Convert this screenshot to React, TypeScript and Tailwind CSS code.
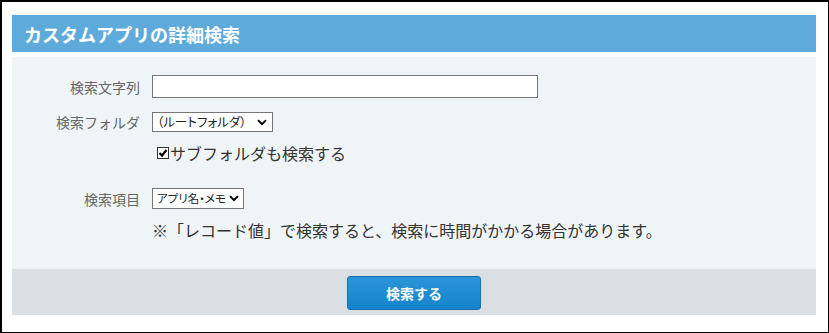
const JP = "font-['Noto_Sans_CJK_JP','Noto_Sans',sans-serif]";

function FakeSelect({ value, width, text }: { value: string; width: string; text: string }) {
  return (
    <div
      className={`${width} h-full border border-[#767676] bg-white flex items-center justify-between gap-[3px] pl-[4px] pr-[4px]`}
    >
      <span className={`${text} leading-none text-[#222] whitespace-nowrap [font-feature-settings:'palt']`}>
        {value}
      </span>
      <svg viewBox="0 0 12 8" className="w-[10px] h-[7px] shrink-0">
        <path d="M1.2 1.2 L6 6 L10.8 1.2" fill="none" stroke="#000" strokeWidth="2.4" />
      </svg>
    </div>
  );
}

export default function App() {
  return (
    <div
      className={`w-[829px] h-[333px] bg-white border-t-2 border-l-2 border-r border-b border-black pl-[10px] pt-[13px] ${JP}`}
    >
      <div className="w-[804px] flex flex-col">
        {/* Header */}
        <div className="h-[37px] bg-[#5eabdb] flex items-center pl-[12px]">
          <span className="text-white text-[18px] font-bold leading-none">カスタムアプリの詳細検索</span>
        </div>

        {/* Body */}
        <div className="mt-[5px] h-[212px] bg-[#eff4f7] pt-[18px] flex flex-col">
          <div className="flex items-center h-[23px]">
            <span className="w-[128px] text-right text-[14px] text-[#666] leading-none">検索文字列</span>
            <input
              type="text"
              className="ml-[12px] w-[386px] h-full border border-[#767676] bg-white outline-none"
            />
          </div>

          <div className="flex items-center h-[20px] mt-[14px]">
            <span className="w-[128px] text-right text-[14px] text-[#666] leading-none">検索フォルダ</span>
            <div className="ml-[12px] h-full">
              <FakeSelect value="（ルートフォルダ）" width="w-[121px] pr-[5px]" text="text-[12.5px]" />
            </div>
          </div>

          <div className="flex items-center h-[22px] mt-[10px] pl-[145px]">
            <span className="w-[12px] h-[12px] border border-[#333] bg-white flex items-center justify-center">
              <svg viewBox="0 0 10 10" className="w-[10px] h-[10px]">
                <path d="M1.5 5 L4 7.5 L8.5 2" fill="none" stroke="#000" strokeWidth="2.2" />
              </svg>
            </span>
            <span className="ml-[1px] text-[16px] text-[#333] leading-none">サブフォルダも検索する</span>
          </div>

          <div className="flex items-center h-[21px] mt-[24px]">
            <span className="w-[128px] text-right text-[14px] text-[#666] leading-none">検索項目</span>
            <div className="ml-[12px] h-full">
              <FakeSelect value="アプリ名・メモ" width="w-[92px]" text="text-[11.5px]" />
            </div>
          </div>

          <div className="flex items-center h-[22px] mt-[10px] pl-[140px]">
            <span className="text-[16px] text-[#333] leading-none">
              ※「レコード値」で検索すると、検索に時間がかかる場合があります。
            </span>
          </div>
        </div>

        {/* Footer */}
        <div className="h-[46px] bg-[#d9dfe3] flex items-center justify-center pt-[2px]">
          <button className="w-[134px] h-[34px] rounded-[3px] border border-[#1b6fae] bg-gradient-to-b from-[#2b95d9] to-[#1483cc] text-white text-[14px] font-bold">
            検索する
          </button>
        </div>
      </div>
    </div>
  );
}
